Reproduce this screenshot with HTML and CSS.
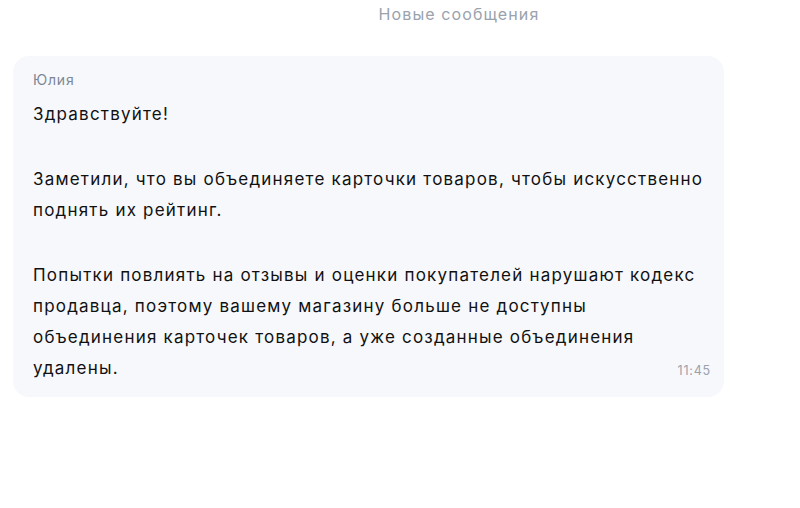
FILE: index.html
```html
<!DOCTYPE html>
<html lang="ru">
<head>
<meta charset="utf-8">
<link rel="stylesheet" href="styles.css">
</head>
<body>
<div class="page">
  <div class="divider">Новые сообщения</div>
  <div class="bubble">
    <div class="author">Юлия</div>
    <div class="text">
      <p>Здравствуйте!</p>
      <p>Заметили, что вы объединяете карточки товаров, чтобы искусственно<br>поднять их рейтинг.</p>
      <p class="last">Попытки повлиять на отзывы и оценки покупателей нарушают кодекс<br>продавца, поэтому вашему магазину больше не доступны<br>объединения карточек товаров, а уже созданные объединения<br>удалены.<span class="time">11:45</span></p>
    </div>
  </div>
</div>
</body>
</html>
```
FILE: styles.css
```css
* { box-sizing: border-box; }
html, body { margin: 0; padding: 0; background: #fff; }
body { font-family: Inter, "Noto Sans", sans-serif; color: #111; }
.page { width: 800px; height: 508px; padding: 4px 0 0 13px; }
.divider {
  width: 711px;
  padding-left: 181px;
  text-align: center;
  font-size: 16px;
  letter-spacing: 1.1px;
  line-height: 20px;
  color: #99a2ad;
  height: 52px;
}
.bubble {
  width: 711px;
  background: #f7f8fc;
  border-radius: 16px;
  padding: 15px 13px 13px 20px;
}
.author {
  font-size: 14px;
  letter-spacing: 0.8px;
  line-height: 18px;
  color: #7d8794;
  margin-bottom: 10px;
}
.text {
  font-size: 17px;
  line-height: 31px;
  letter-spacing: 1.2px;
}
.text p { margin: 0 0 34px; }
.text p.last { margin: 0; }
.time {
  float: right;
  font-size: 12.5px;
  letter-spacing: 0.8px;
  color: #99a2ad;
  line-height: 31px;
  margin-top: 2px;
}
```
